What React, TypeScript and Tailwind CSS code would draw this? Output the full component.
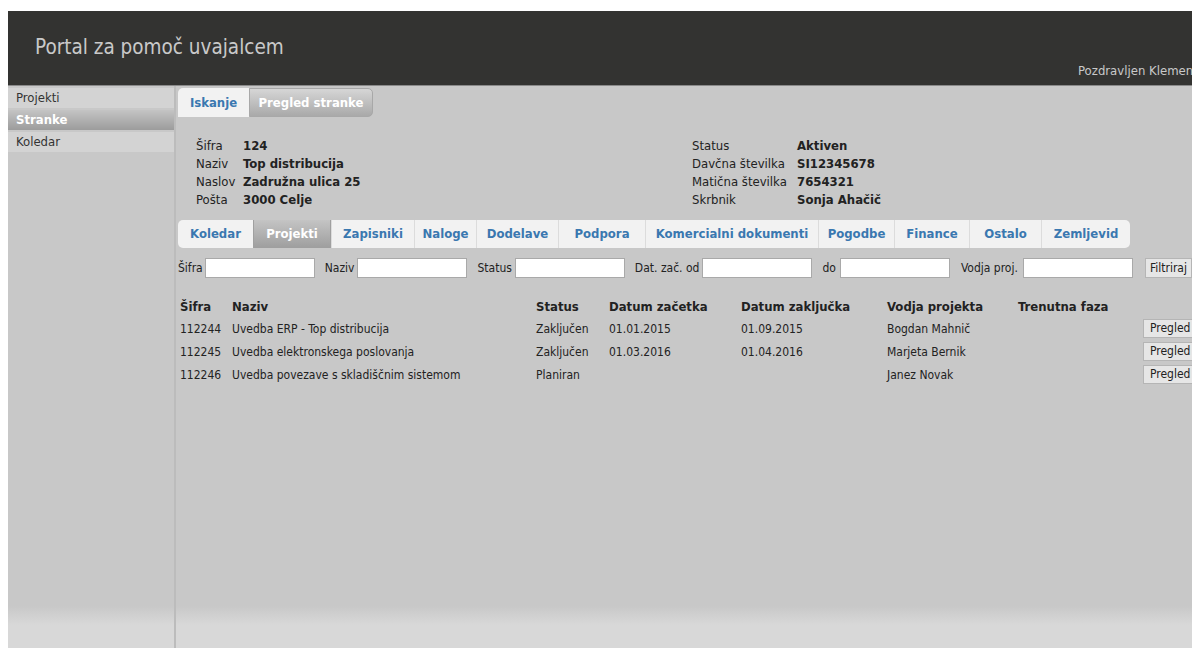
import React from 'react';

const font = { fontFamily: '"DejaVu Sans Condensed", "DejaVu Sans", Verdana, sans-serif' };

const sideItems = ['Projekti', 'Stranke', 'Koledar'];

const subTabs = [
  { label: 'Koledar', w: 'w-[75px]' },
  { label: 'Projekti', w: 'w-[78px]' },
  { label: 'Zapisniki', w: 'w-[83px]' },
  { label: 'Naloge', w: 'w-[62px]' },
  { label: 'Dodelave', w: 'w-[82px]' },
  { label: 'Podpora', w: 'w-[87px]' },
  { label: 'Komercialni dokumenti', w: 'w-[173px]' },
  { label: 'Pogodbe', w: 'w-[76px]' },
  { label: 'Finance', w: 'w-[75px]' },
  { label: 'Ostalo', w: 'w-[72px]' },
  { label: 'Zemljevid', w: 'w-[89px]' },
];

const projects = [
  { id: '112244', name: 'Uvedba ERP - Top distribucija', status: 'Zaključen', start: '01.01.2015', end: '01.09.2015', lead: 'Bogdan Mahnič' },
  { id: '112245', name: 'Uvedba elektronskega poslovanja', status: 'Zaključen', start: '01.03.2016', end: '01.04.2016', lead: 'Marjeta Bernik' },
  { id: '112246', name: 'Uvedba povezave s skladiščnim sistemom', status: 'Planiran', start: '', end: '', lead: 'Janez Novak' },
];

function Field({ label, gap, ml = '' }: { label: string; gap: string; ml?: string }) {
  return (
    <div className={`flex shrink-0 items-center ${gap} ${ml}`}>
      <span className="whitespace-nowrap">{label}</span>
      <input className="h-[20px] w-[110px] border border-[#a9a9a9] bg-white px-1 outline-none" />
    </div>
  );
}

export default function App() {
  return (
    <div className="h-[648px] w-[1192px] overflow-hidden bg-white pl-2 pt-[11px] text-[#222] font-stretch-condensed" style={font}>
      {/* header bar */}
      <header className="relative h-[75px] w-[1200px] border-b border-[#8a8a8a] bg-[#333331]">
        <h1 className="pl-[27px] pt-[23px] text-[20.5px] leading-[26px] text-[#c9c9c9]">Portal za pomoč uvajalcem</h1>
        <span className="absolute left-[1070px] top-[50px] whitespace-nowrap text-[13px] text-[#c9c9c9]">Pozdravljen Klemen</span>
      </header>

      <div className="flex h-[562px] bg-[linear-gradient(to_bottom,#c8c8c8_520px,#d8d8d8_539px)]">
        {/* side menu */}
        <nav className="flex w-[168px] flex-col gap-[2px] border-r-2 border-[#bcbcbc] pt-[2px] text-[13px]">
          {sideItems.map((item) => (
            <div
              key={item}
              className={
                item === 'Stranke'
                  ? 'h-[20px] bg-[linear-gradient(to_bottom,#c4c4c4,#9c9c9c)] pl-[8px] font-bold leading-[20px] text-white'
                  : 'h-[20px] bg-[#d3d3d3] pl-[8px] leading-[20px] text-[#333]'
              }
            >
              {item}
            </div>
          ))}
        </nav>

        {/* content */}
        <main className="min-w-0 flex-1 pl-[2px] pt-[2px] text-[13px]">
          <div className="flex h-[29px] text-[13px] font-bold">
            <div className="w-[71px] rounded-tl-[5px] bg-[#f2f2f2] text-center leading-[29px] text-[#3a78b0]">Iskanje</div>
            <div className="w-[124px] rounded-r-[5px] border border-[#a8a8a8] bg-[linear-gradient(to_bottom,#d6d6d6,#a9a9a9)] text-center leading-[27px] text-white">Pregled stranke</div>
          </div>

          {/* customer details */}
          <div className="flex items-start pt-[20px] leading-[18px]">
            <div className="grid w-[514px] grid-cols-[47px_1fr] pl-[18px]">
              <span>Šifra</span><b>124</b>
              <span>Naziv</span><b>Top distribucija</b>
              <span>Naslov</span><b>Zadružna ulica 25</b>
              <span>Pošta</span><b>3000 Celje</b>
            </div>
            <div className="grid grid-cols-[105px_1fr] whitespace-nowrap">
              <span>Status</span><b>Aktiven</b>
              <span>Davčna številka</span><b>SI12345678</b>
              <span>Matična številka</span><b>7654321</b>
              <span>Skrbnik</span><b>Sonja Ahačič</b>
            </div>
          </div>

          {/* sub tabs */}
          <div className="mt-[11px] flex h-[28px] w-fit rounded-[5px] bg-[#f2f2f2] text-[13px] font-bold">
            {subTabs.map((t, i) => (
              <div
                key={t.label}
                className={
                  t.label === 'Projekti'
                    ? `${t.w} border-x border-[#a0a0a0] bg-[linear-gradient(to_bottom,#c4c4c4,#9e9e9e)] text-center leading-[28px] text-white`
                    : `${t.w} ${i > 0 ? 'border-l border-[#dcdcdc]' : ''} whitespace-nowrap text-center leading-[28px] text-[#3a78b0]`
                }
              >
                {t.label}
              </div>
            ))}
          </div>

          {/* filters */}
          <div className="mt-[10px] flex items-center gap-[10px] whitespace-nowrap text-[12px]">
            <Field label="Šifra" gap="gap-[2px]" />
            <Field label="Naziv" gap="gap-[3px]" />
            <Field label="Status" gap="gap-[3px]" />
            <Field label="Dat. zač. od" gap="gap-[3px]" />
            <Field label="do" gap="gap-[4px]" />
            <Field label="Vodja proj." gap="gap-[5px]" ml="ml-[1px]" />
            <button className="ml-[2px] h-[20px] shrink-0 border border-[#b5b5b5] bg-[#e6e6e6] px-[4px] text-[12px] leading-[18px]">Filtriraj</button>
          </div>

          {/* project list */}
          <table className="mt-[18px] w-[1030px] table-fixed text-[12px]">
            <thead>
              <tr className="h-[21px] text-left text-[13px]">
                <th className="w-[54px] pl-[2px]">Šifra</th>
                <th className="w-[304px]">Naziv</th>
                <th className="w-[73px]">Status</th>
                <th className="w-[132px]">Datum začetka</th>
                <th className="w-[146px]">Datum zaključka</th>
                <th className="w-[131px]">Vodja projekta</th>
                <th className="w-[125px]">Trenutna faza</th>
                <th></th>
              </tr>
            </thead>
            <tbody>
              {projects.map((p) => (
                <tr key={p.id} className="h-[23px]">
                  <td className="pl-[2px]">{p.id}</td>
                  <td>{p.name}</td>
                  <td>{p.status}</td>
                  <td>{p.start}</td>
                  <td>{p.end}</td>
                  <td>{p.lead}</td>
                  <td></td>
                  <td className="whitespace-nowrap">
                    <button className="h-[19px] border border-[#b5b5b5] bg-[#e6e6e6] px-[6px] leading-[17px]">Pregled</button>
                  </td>
                </tr>
              ))}
            </tbody>
          </table>
        </main>
      </div>
    </div>
  );
}
